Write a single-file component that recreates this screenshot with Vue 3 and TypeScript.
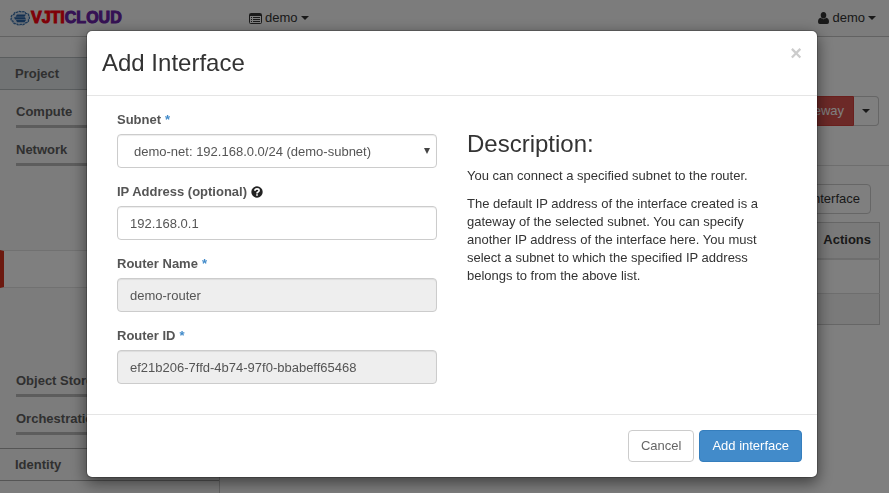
<script setup lang="ts">
import { ref } from 'vue'

const subnets = ['demo-net: 192.168.0.0/24 (demo-subnet)']
const subnet = ref(subnets[0])
const ipAddress = ref('192.168.0.1')
const routerName = ref('demo-router')
const routerId = ref('ef21b206-7ffd-4b74-97f0-bbabeff65468')
const columns = ['', 'Actions']
</script>

<template>
  <div class="page">
    <header class="navbar">
      <a class="brand" href="#">
        <svg class="brand-mark" viewBox="0 0 20 16" aria-hidden="true">
          <path d="M4 4.500Q4 2 7 2.400Q9 .5 11.500 2Q14.500 .8 15.700 3.300Q19.200 3.200 18.700 6Q20.500 8 18.500 9.500Q19 12.500 15.500 12.800Q13.500 15.800 11 14.200Q8 16 6.500 13.600Q3 14.200 3 11.300Q.2 10.500 1.400 8Q.5 5 4 4.500Z" fill="#d5e0ee" stroke="#3b72ad" stroke-width="1.300" stroke-dasharray="2.600 .6" />
          <path d="M7 4.500h9l-1.500 2.300H5.500zM4 7.300h11l1 2.200H5zM6 10h10l-1.500 2.300H7z" fill="#2862a5" />
        </svg>
        <span class="brand-name"><span class="brand-red">VJTI</span><span class="brand-purple">CLOUD</span></span>
      </a>
      <button class="nav-menu project-menu" type="button">
        <svg class="icon-list" viewBox="0 0 13 11" aria-hidden="true">
          <rect x=".5" y=".5" width="12" height="10" rx="1" fill="none" stroke="#333" />
          <path d="M1 1h11v2H1zM2 4h1v1H2zM4 4h7v1H4zM2 6h1v1H2zM4 6h7v1H4zM2 8h1v1H2zM4 8h7v1H4z" fill="#333" />
        </svg>
        <span>demo</span><span class="caret"></span>
      </button>
      <button class="nav-menu user-menu" type="button">
        <svg class="icon-user" viewBox="0 0 11 12" aria-hidden="true">
          <path d="M5.500 0C7.400 0 8.300 1.300 8.300 3.200S7.200 6.600 5.500 6.600S2.700 5.100 2.700 3.200S3.600 0 5.500 0zM2.700 5.800Q5.500 8.600 8.300 5.800Q11 6.300 11 10Q11 12 9.200 12H1.800Q0 12 0 10Q0 6.300 2.700 5.800z" fill="#333" />
        </svg>
        <span>demo</span><span class="caret"></span>
      </button>
    </header>

    <div class="shell">
      <nav class="sidebar">
        <a class="side-group open" href="#">Project</a>
        <a class="side-item" href="#">Compute</a>
        <a class="side-item" href="#">Network</a>
        <a class="side-current" href="#" aria-label="Routers"></a>
        <a class="side-item" href="#">Object Store</a>
        <a class="side-item" href="#">Orchestration</a>
        <a class="side-group identity" href="#">Identity</a>
      </nav>
      <main class="content">
        <div class="page-actions">
          <button class="btn danger" type="button">Clear Gateway</button>
          <button class="btn toggle" type="button" aria-label="More actions"><span class="caret"></span></button>
        </div>
        <div class="table-actions">
          <button class="btn" type="button">Add Interface</button>
        </div>
        <table class="interfaces">
          <thead>
            <tr><th v-for="c in columns" :key="c">{{ c }}</th></tr>
          </thead>
          <tbody>
            <tr><td colspan="2"></td></tr>
          </tbody>
          <tfoot>
            <tr><td colspan="2"></td></tr>
          </tfoot>
        </table>
      </main>
    </div>

    <div class="backdrop">
      <form class="modal" role="dialog" aria-labelledby="dialog-title" @submit.prevent>
        <header class="modal-header">
          <h3 id="dialog-title">Add Interface</h3>
          <button class="close" type="button" aria-label="Close">×</button>
        </header>
        <div class="modal-body">
          <div class="fields">
            <div class="field">
              <label for="subnet">Subnet <span class="required">*</span></label>
              <div class="select-wrap">
                <select id="subnet" v-model="subnet" class="control">
                  <option v-for="s in subnets" :key="s" :value="s">{{ s }}</option>
                </select>
                <svg class="arrow" viewBox="0 0 6 6" aria-hidden="true"><path d="M0 0h6L3 6z" fill="#444" /></svg>
              </div>
            </div>
            <div class="field">
              <label for="ip">IP Address (optional)
                <svg class="icon-help" viewBox="0 0 12 12" aria-hidden="true">
                  <circle cx="6" cy="6" r="5.700" fill="#222" />
                  <path d="M3.900 4.700Q3.900 2.900 6 2.900T8.100 4.500Q8.100 5.500 6.900 6.100Q6 6.500 6 7.400M6 8.300v1.500" fill="none" stroke="#fff" stroke-width="1.700" />
                </svg>
              </label>
              <input id="ip" v-model="ipAddress" class="control" type="text">
            </div>
            <div class="field">
              <label for="router-name">Router Name <span class="required">*</span></label>
              <input id="router-name" v-model="routerName" class="control" type="text" readonly>
            </div>
            <div class="field">
              <label for="router-id">Router ID <span class="required">*</span></label>
              <input id="router-id" v-model="routerId" class="control" type="text" readonly>
            </div>
          </div>
          <div class="description">
            <h3>Description:</h3>
            <p>You can connect a specified subnet to the router.</p>
            <p>The default IP address of the interface created is a gateway of the selected subnet. You can specify another IP address of the interface here. You must select a subnet to which the specified IP address belongs to from the above list.</p>
          </div>
        </div>
        <footer class="modal-footer">
          <button class="btn cancel" type="button">Cancel</button>
          <button class="btn primary" type="submit">Add interface</button>
        </footer>
      </form>
    </div>
  </div>
</template>

<style>
body {
  margin: 0;
}
</style>

<style scoped>
.page,
.page * {
  box-sizing: border-box;
}
.page {
  height: 100vh;
  display: flex;
  flex-direction: column;
  overflow: hidden;
  background: #fff;
  color: #333;
  font: 13px/18px "Liberation Sans", Arial, sans-serif;
}
button,
input,
select {
  font: inherit;
  color: inherit;
}
a {
  color: inherit;
  text-decoration: none;
}

.navbar {
  display: flex;
  align-items: center;
  flex: none;
  height: 37px;
  padding: 0 13px 0 10px;
  background: #f8f8f8;
  border-bottom: 1px solid #c4c4c4;
}
.brand {
  display: flex;
  align-items: center;
  gap: 1px;
  width: 239px;
}
.brand-mark {
  width: 20px;
  height: 16px;
}
.brand-name {
  font-size: 16px;
  font-weight: bold;
}
.brand-red {
  color: #ff0010;
  -webkit-text-stroke: 1px #ff0010;
}
.brand-purple {
  color: #6a22a8;
  -webkit-text-stroke: 1px #6a22a8;
}
.nav-menu {
  display: flex;
  align-items: center;
  gap: 3px;
  padding: 0;
  border: 0;
  background: none;
}
.user-menu {
  margin-left: auto;
}
.icon-list {
  width: 13px;
  height: 11px;
}
.icon-user {
  width: 11px;
  height: 12px;
}
.caret {
  border: 4px solid transparent;
  border-top-color: #333;
  border-bottom: 0;
}

.shell {
  display: flex;
  flex: 1;
  min-height: 0;
}
.sidebar {
  display: flex;
  flex-direction: column;
  flex: none;
  width: 220px;
  padding-top: 20px;
  background: #f9f9f9;
  border-right: 1px solid #ccc;
  color: #606060;
  font-weight: bold;
}
.side-group {
  padding: 7px 15px 6px;
  border: 1px solid #aaa;
  border-width: 1px 0;
}
.side-group.open {
  background: #e2e6e9;
  border-color: #b4babd;
}
.identity {
  margin-top: 13px;
}
.side-item {
  margin-left: 16px;
  padding: 13px 0 4px;
  border-bottom: 3px solid #bbb;
}
.side-current {
  height: 38px;
  margin: 84px 0 71px;
  background: #fff;
  border: solid #e2e2e2;
  border-width: 1px 0 1px 4px;
  border-left-color: #d9331f;
}

.content {
  flex: 1;
  padding: 59px 9px 0 15px;
}
.btn {
  padding: 6px 12px;
  border: 1px solid #ccc;
  border-radius: 4px;
  background: #fff;
}
.page-actions {
  display: flex;
  justify-content: flex-end;
  margin: 0 -9px 18px -15px;
  padding: 0 10px 39px;
  border-bottom: 1px solid #ddd;
}
.page-actions .btn {
  padding: 5px 9px;
}
.page-actions .danger {
  border-color: #d43f3a;
  border-radius: 4px 0 0 4px;
  background: #d9534f;
  color: #fff;
}
.page-actions .toggle {
  display: flex;
  align-items: center;
  padding: 0 8px;
  border-left: 0;
  border-radius: 0 4px 4px 0;
}
.table-actions {
  display: flex;
  justify-content: flex-end;
  padding: 0 9px 8px;
}
.table-actions .btn {
  padding: 5px 10px;
}
.interfaces {
  width: 100%;
  border: 1px solid #ccc;
  border-collapse: collapse;
}
.interfaces th {
  height: 36px;
  padding: 0 8px;
  border-bottom: 2px solid #ddd;
  background: #f5f5f5;
  text-align: right;
}
.interfaces td {
  height: 35px;
  padding: 0;
}
.interfaces tfoot td {
  height: 31px;
  border-top: 1px solid #ddd;
  background: #f5f5f5;
}

.backdrop {
  position: fixed;
  inset: 0;
  padding: 30px 0 0 15px;
  background: rgba(0, 0, 0, 0.5);
}
.modal {
  max-width: 732px;
  margin: 0 auto;
  border: 1px solid rgba(0, 0, 0, 0.2);
  border-radius: 6px;
  background: #fff;
  background-clip: padding-box;
  box-shadow: 0 5px 15px rgba(0, 0, 0, 0.5);
}
.modal-header {
  display: flex;
  justify-content: space-between;
  align-items: flex-start;
  padding: 15px;
  border-bottom: 1px solid #e5e5e5;
}
h3,
p {
  margin: 0;
}
h3 {
  font-size: 24px;
  font-weight: normal;
}
.modal-header h3 {
  line-height: 34px;
}
.close {
  padding: 0;
  border: 0;
  background: none;
  color: #ccc;
  font-size: 20px;
  font-weight: bold;
  line-height: 14px;
}
.modal-body {
  display: grid;
  grid-template-columns: 1fr 1fr;
  gap: 30px;
  padding: 15px 30px;
}
.field {
  margin-bottom: 15px;
}
.field label {
  display: flex;
  align-items: center;
  gap: 4px;
  margin-bottom: 5px;
  color: #555;
  font-weight: bold;
}
.required {
  color: #428bca;
}
.icon-help {
  width: 12px;
  height: 12px;
}
.control {
  display: block;
  width: 100%;
  height: 34px;
  padding: 6px 12px;
  border: 1px solid #ccc;
  border-radius: 4px;
  background: #fff;
  box-shadow: inset 0 1px 1px rgba(0, 0, 0, 0.075);
  color: #555;
  appearance: none;
}
.control[readonly] {
  background: #eee;
}
.select-wrap {
  display: grid;
  align-items: center;
}
.select-wrap > * {
  grid-area: 1 / 1;
}
.select-wrap .control {
  padding: 7px 16px 5px;
}
.arrow {
  width: 6px;
  height: 6px;
  margin-right: 7px;
  justify-self: end;
  pointer-events: none;
}
.description h3 {
  margin-top: 20px;
  line-height: 26px;
}
.description p {
  margin-top: 10px;
}
.modal-footer {
  display: flex;
  justify-content: flex-end;
  gap: 5px;
  padding: 15px;
  border-top: 1px solid #e5e5e5;
}
.cancel {
  color: #666;
}
.primary {
  border-color: #357ebd;
  background: #428bca;
  color: #fff;
}
</style>
